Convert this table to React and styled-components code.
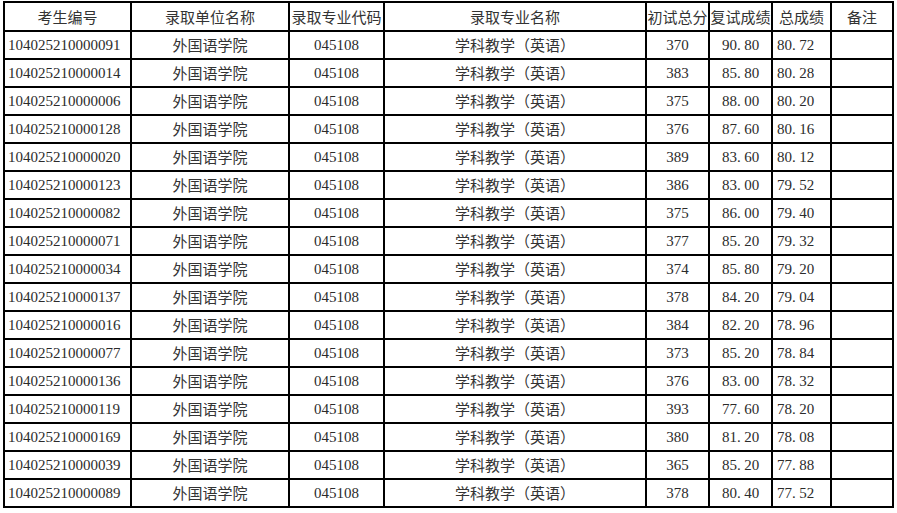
import React from "react";
import styled, { createGlobalStyle } from "styled-components";

const Global = createGlobalStyle`
  html, body { margin: 0; padding: 0; background: #ffffff; }
  body { font-family: "Liberation Serif", "Noto Sans CJK SC", serif; }
`;

const Page = styled.div`
  width: 897px;
  height: 513px;
  padding: 1px 0 0 3px;
  box-sizing: border-box;
  background: #fff;
`;

const Table = styled.table`
  border-collapse: collapse;
  table-layout: fixed;
  width: 889px;
  font-family: "Liberation Serif", "Noto Sans CJK SC", serif;
  font-size: 15px;
  color: #2b2b2b;
`;

const Row = styled.tr`
  height: ${(p) => p.$h}px;
`;

const Cell = styled.td`
  border: 2px solid #000;
  padding: 0 0 0 ${(p) => p.$pl || 0}px;
  text-align: ${(p) => p.$align || "center"};
  white-space: nowrap;
  overflow: hidden;
  line-height: 18px;
  vertical-align: middle;
`;

const Head = styled(Cell).attrs({ as: "th" })`
  font-weight: normal;
  font-family: "Noto Sans CJK SC", sans-serif;
  color: #333;
  letter-spacing: 0;
`;

const Cjk = styled.span`
  font-family: "Noto Sans CJK SC", sans-serif;
  color: #333;
`;

const Dot = styled.span`
  letter-spacing: 3.5px;
`;

const cols = [127, 158, 95, 262, 63, 63, 59, 62];

const heads = ["考生编号", "录取单位名称", "录取专业代码", "录取专业名称", "初试总分", "复试成绩", "总成绩", "备注"];

const rows = [
  ["104025210000091", "370", "90.80", "80.72"],
  ["104025210000014", "383", "85.80", "80.28"],
  ["104025210000006", "375", "88.00", "80.20"],
  ["104025210000128", "376", "87.60", "80.16"],
  ["104025210000020", "389", "83.60", "80.12"],
  ["104025210000123", "386", "83.00", "79.52"],
  ["104025210000082", "375", "86.00", "79.40"],
  ["104025210000071", "377", "85.20", "79.32"],
  ["104025210000034", "374", "85.80", "79.20"],
  ["104025210000137", "378", "84.20", "79.04"],
  ["104025210000016", "384", "82.20", "78.96"],
  ["104025210000077", "373", "85.20", "78.84"],
  ["104025210000136", "376", "83.00", "78.32"],
  ["104025210000119", "393", "77.60", "78.20"],
  ["104025210000169", "380", "81.20", "78.08"],
  ["104025210000039", "365", "85.20", "77.88"],
  ["104025210000089", "378", "80.40", "77.52"],
];

function Score({ v }) {
  const [a, b] = v.split(".");
  return (
    <>
      {a}
      <Dot>.</Dot>
      {b}
    </>
  );
}

export default function App() {
  return (
    <Page>
      <Global />
      <Table>
        <colgroup>
          {cols.map((w, i) => (
            <col key={i} style={{ width: w }} />
          ))}
        </colgroup>
        <thead>
          <Row $h={29}>
            {heads.map((h) => (
              <Head key={h}>{h}</Head>
            ))}
          </Row>
        </thead>
        <tbody>
          {rows.map((r) => (
            <Row key={r[0]} $h={28}>
              <Cell $align="left" $pl={3}>{r[0]}</Cell>
              <Cell><Cjk>外国语学院</Cjk></Cell>
              <Cell>045108</Cell>
              <Cell><Cjk>学科教学（英语）</Cjk></Cell>
              <Cell>{r[1]}</Cell>
              <Cell><Score v={r[2]} /></Cell>
              <Cell $align="left" $pl={4}><Score v={r[3]} /></Cell>
              <Cell />
            </Row>
          ))}
        </tbody>
      </Table>
    </Page>
  );
}
